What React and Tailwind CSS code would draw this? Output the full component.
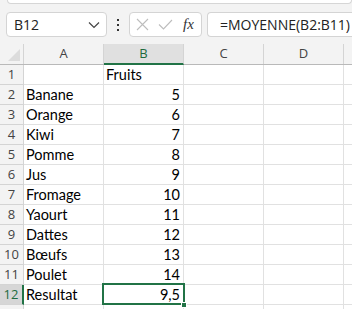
import React from "react";

const rows = [
  ["", "Fruits", true],
  ["Banane", "5"],
  ["Orange", "6"],
  ["Kiwi", "7"],
  ["Pomme", "8"],
  ["Jus", "9"],
  ["Fromage", "10"],
  ["Yaourt", "11"],
  ["Dattes", "12"],
  ["Bœufs", "13"],
  ["Poulet", "14"],
  ["Resultat", "9,5"],
];

const cellFont = { fontFamily: "Lato, 'Liberation Sans', sans-serif" };
const uiFont = { fontFamily: "'Open Sans', 'Liberation Sans', sans-serif" };

export default function App() {
  return (
    <div className="w-[352px] h-[309px] overflow-hidden bg-[#f3f3f3] relative">
      {/* ribbon bottom */}
      <div className="ml-[7px] h-[4px] bg-white border border-t-0 border-[#d6d6d6] rounded-b-[5px]" />
      {/* formula bar */}
      <div className="flex items-center h-[25px] mt-[8px] pl-[6px]">
        <div className="w-[101px] h-[25px] bg-white border border-[#d4d4d4] rounded-[4px] flex items-center justify-between pl-[7px] pr-[6px]">
          <span className="text-[14px] text-[#222]" style={uiFont}>B12</span>
          <svg width="12" height="8" viewBox="0 0 12 8">
            <path d="M1 1.5 L6 6.5 L11 1.5" fill="none" stroke="#444" strokeWidth="1.2" />
          </svg>
        </div>
        <div className="w-[22px] flex flex-col items-center gap-[3px]">
          <div className="w-[2px] h-[2px] bg-[#333]" />
          <div className="w-[2px] h-[2px] bg-[#333]" />
          <div className="w-[2px] h-[2px] bg-[#333]" />
        </div>
        <div className="w-[73px] h-[25px] bg-white border border-[#d4d4d4] rounded-[4px] flex items-center pl-[6px] gap-[9px]">
          <svg width="13" height="13" viewBox="0 0 13 13">
            <path d="M1 1 L12 12 M12 1 L1 12" stroke="#bdbdbd" strokeWidth="1.1" fill="none" />
          </svg>
          <svg width="15" height="11" viewBox="0 0 15 11">
            <path d="M1 5.5 L5.5 10 L14 1" stroke="#bdbdbd" strokeWidth="1.1" fill="none" />
          </svg>
          <span className="text-[15px] italic text-[#333] ml-[1px]" style={{ fontFamily: "'Liberation Serif', serif" }}>fx</span>
        </div>
        <div className="ml-[5px] flex-1 h-[25px] bg-white border border-r-0 border-[#d4d4d4] rounded-l-[4px] flex items-center pl-[12px]">
          <span className="text-[14px] text-[#222]" style={uiFont}>=MOYENNE(B2:B11)</span>
        </div>
      </div>

      {/* grid */}
      <div className="mt-[7px] bg-white">
        {/* header row */}
        <div className="flex h-[21px] bg-[#f3f3f3] border-b border-[#b9b9b9] text-[13px] text-[#444]" style={uiFont}>
          <div className="w-[24px] shrink-0 border-r border-[#d4d4d4] relative">
            <svg className="absolute left-[8px] bottom-[3px]" width="12" height="12" viewBox="0 0 12 12">
              <path d="M12 0 L12 12 L0 12 Z" fill="#dcdcdc" />
            </svg>
          </div>
          <div className="w-[80px] shrink-0 border-r border-[#d4d4d4] flex items-center justify-center">A</div>
          <div className="w-[80px] shrink-0 border-r border-[#d4d4d4] bg-[#e0e0e0] text-[#1e6b3e] flex items-center justify-center border-b-2 border-b-[#217346] -mb-[1px]">B</div>
          <div className="w-[80px] shrink-0 border-r border-[#d4d4d4] flex items-center justify-center">C</div>
          <div className="w-[80px] shrink-0 border-r border-[#d4d4d4] flex items-center justify-center">D</div>
          <div className="flex-1" />
        </div>
        {rows.map((r, i) => {
          const sel = i === 11;
          return (
            <div key={i} className="flex h-[20px]">
              <div
                className={
                  "w-[24px] shrink-0 border-b border-r flex items-center justify-center text-[13px] " +
                  (sel
                    ? "bg-[#d6d6d6] text-[#1e6b3e] border-r-[#217346] border-r-2 border-b-[#d4d4d4]"
                    : "bg-[#f3f3f3] text-[#444] border-[#d4d4d4]")
                }
                style={uiFont}
              >
                {i + 1}
              </div>
              <div className="w-[80px] shrink-0 border-b border-r border-[#e1e1e1] flex items-center pl-[2px] text-[14.5px] text-black" style={cellFont}>
                {r[0]}
              </div>
              <div
                className={
                  "w-[80px] shrink-0 border-b border-r border-[#e1e1e1] flex items-center text-[14.5px] text-black relative " +
                  (r[2] ? "justify-start pl-[2px]" : "justify-end pr-[3px]")
                }
                style={cellFont}
              >
                {r[1]}
                {sel && (
                  <>
                    <div className="absolute -left-[2px] -top-[2px] -right-[2px] -bottom-[1px] border-2 border-[#217346]" />
                    <div className="absolute -right-[4px] -bottom-[4px] w-[6px] h-[6px] bg-[#217346] border border-white" />
                  </>
                )}
              </div>
              <div className="w-[80px] shrink-0 border-b border-r border-[#e1e1e1]" />
              <div className="w-[80px] shrink-0 border-b border-r border-[#e1e1e1]" />
              <div className="flex-1 border-b border-[#e1e1e1]" />
            </div>
          );
        })}
        <div className="flex h-[20px]">
          <div className="w-[24px] shrink-0 border-r border-[#d4d4d4] bg-[#f3f3f3]" />
          <div className="w-[80px] shrink-0 border-r border-[#e1e1e1]" />
          <div className="w-[80px] shrink-0 border-r border-[#e1e1e1]" />
          <div className="w-[80px] shrink-0 border-r border-[#e1e1e1]" />
          <div className="w-[80px] shrink-0 border-r border-[#e1e1e1]" />
        </div>
      </div>
    </div>
  );
}
